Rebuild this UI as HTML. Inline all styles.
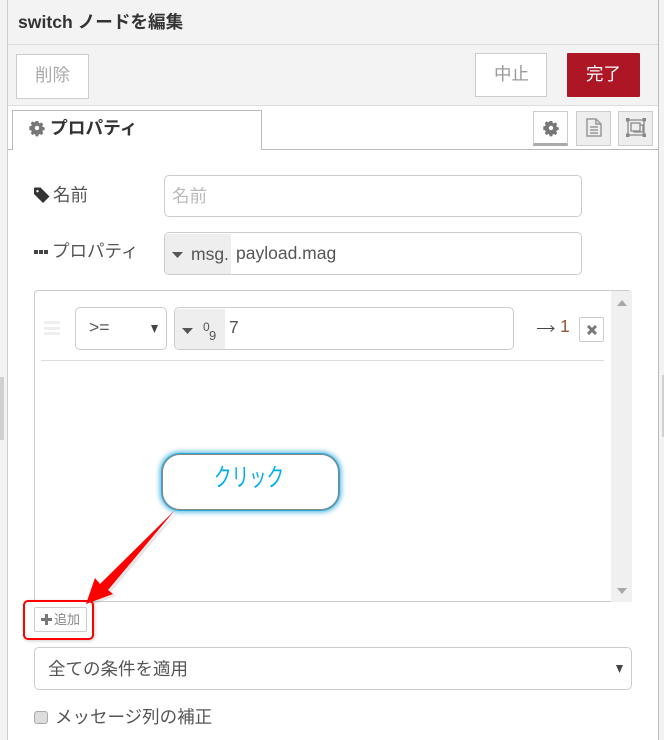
<!DOCTYPE html>
<html lang="ja"><head><meta charset="utf-8"><title>switch</title>
<style>
html,body{margin:0;padding:0;background:#fff}
body{width:664px;height:740px;position:relative;overflow:hidden;font-family:"Liberation Sans","Noto Sans CJK JP",sans-serif;color:#555}
.a{position:absolute;box-sizing:border-box}
.t{position:absolute;white-space:nowrap;line-height:1}
.inp{border:1px solid #ccc;border-radius:5px;background:#fff}
svg{position:absolute;overflow:visible}
</style></head><body>
<div class="a" style="left:0;top:0;width:8px;height:740px;background:#f3f3f3;border-right:1px solid #ccc"></div>
<div class="a" style="left:0;top:377px;width:4px;height:63px;background:#d0d0d0"></div>
<div class="a" style="left:658px;top:0;width:6px;height:740px;background:#f3f3f3;border-left:1px solid #bbb"></div>
<div class="a" style="left:662px;top:375px;width:2px;height:62px;background:#d0d0d0"></div>

<div class="a" style="left:8px;top:0;width:650px;height:45px;background:#f3f3f3;border-bottom:1px solid #ddd"></div>
<div class="t" style="left:18px;top:14px;font-size:17.6px;font-weight:bold;color:#333">switch ノードを編集</div>
<div class="a" style="left:8px;top:45px;width:650px;height:61px;background:#f3f3f3;border-bottom:1px solid #ddd"></div>

<div class="a" style="left:16px;top:54px;width:73px;height:45px;background:#fff;border:1px solid #ccc"></div>
<div class="t" style="left:35px;top:67px;font-size:17.5px;color:#aaa">削除</div>
<div class="a" style="left:475px;top:53px;width:72px;height:44px;background:#fff;border:1px solid #ccc"></div>
<div class="t" style="left:494px;top:66px;font-size:17.5px;color:#999">中止</div>
<div class="a" style="left:567px;top:53px;width:73px;height:44px;background:#ad1625;border-radius:1px"></div>
<div class="t" style="left:586px;top:66px;font-size:17.5px;color:#fff">完了</div>

<div class="a" style="left:8px;top:149px;width:650px;height:1px;background:#bbb"></div>
<div class="a" style="left:12px;top:110px;width:250px;height:40px;background:#fff;border:1px solid #bbb;border-bottom:0"></div>
<svg style="left:29px;top:120px" width="16" height="16" viewBox="0 0 16 16"><path fill="#777" fill-rule="evenodd" d="M6.700 1h2.600l.4 1.900 1.200.5 1.600-1 1.800 1.800-1 1.600.5 1.200 1.900.4v2.600l-1.900.4-.5 1.200 1 1.600-1.800 1.800-1.600-1-1.200.5-.4 1.900H6.700l-.4-1.900-1.200-.5-1.600 1-1.800-1.800 1-1.600-.5-1.200-1.900-.4V6.400l1.900-.4.5-1.200-1-1.600 1.800-1.800 1.600 1 1.200-.5zM8 5.800a2.200 2.200 0 1 0 0 4.400 2.200 2.200 0 0 0 0-4.400z"/></svg>
<div class="t" style="left:50px;top:120px;font-size:17.7px;font-weight:bold;color:#333">プロパティ</div>

<div class="a" style="left:533px;top:111px;width:35px;height:35px;background:#fff;border:1px solid #ccc;border-bottom:3px solid #aaa"></div>
<svg style="left:543px;top:120px" width="16" height="16" viewBox="0 0 16 16"><path fill="#777" fill-rule="evenodd" d="M6.700 1h2.600l.4 1.900 1.200.5 1.600-1 1.800 1.800-1 1.600.5 1.200 1.900.4v2.600l-1.900.4-.5 1.200 1 1.600-1.800 1.800-1.600-1-1.200.5-.4 1.900H6.700l-.4-1.900-1.200-.5-1.600 1-1.800-1.800 1-1.600-.5-1.200-1.900-.4V6.400l1.900-.4.5-1.200-1-1.600 1.800-1.800 1.600 1 1.200-.5zM8 5.800a2.200 2.200 0 1 0 0 4.400 2.200 2.200 0 0 0 0-4.400z"/></svg>
<div class="a" style="left:576px;top:111px;width:35px;height:35px;background:#eee;border:1px solid #ccc"></div>
<svg style="left:586px;top:118px" width="16" height="19" viewBox="0 0 16 19"><path fill="none" stroke="#999" stroke-width="1.500" d="M1 1h9l5 5v12H1zM10 1v5h5M4 9h8M4 12h8M4 15h8"/></svg>
<div class="a" style="left:618px;top:111px;width:35px;height:35px;background:#eee;border:1px solid #ccc"></div>
<svg style="left:626px;top:118px" width="20" height="20" viewBox="0 0 20 20"><path fill="none" stroke="#888" stroke-width="1.300" d="M2 2h16v15H2zM5 5h9v8H5zM14 7h3v7H8v-1"/><path fill="#888" d="M0 0h3.500v3.500H0zM16.500 0H20v3.500h-3.500zM0 15.500h3.500V19H0zM16.500 15.500H20V19h-3.500z"/></svg>

<svg style="left:34px;top:187px" width="16" height="16" viewBox="0 0 16 16"><path fill="#333" fill-rule="evenodd" d="M0 1.500Q0 .5 1 .5h5.500L15.500 9.500 9 16 0 7zM3.500 3a1.200 1.200 0 1 0 0 2.400 1.200 1.200 0 0 0 0-2.400z"/></svg>
<div class="t" style="left:53px;top:187px;font-size:17.5px;color:#555">名前</div>
<div class="a inp" style="left:164px;top:175px;width:418px;height:42px"></div>
<div class="t" style="left:172px;top:188px;font-size:17.5px;color:#bbb">名前</div>

<div class="a" style="left:34px;top:250px;width:4px;height:4px;background:#444"></div>
<div class="a" style="left:39px;top:250px;width:4px;height:4px;background:#444"></div>
<div class="a" style="left:44px;top:250px;width:4px;height:4px;background:#444"></div>
<div class="t" style="left:52px;top:243px;font-size:17.5px;color:#555">プロパティ</div>
<div class="a inp" style="left:164px;top:232px;width:418px;height:43px"></div>
<div class="a" style="left:165px;top:234px;width:66px;height:40px;background:#eee;border-radius:4px 0 0 4px"></div>
<svg style="left:172px;top:252px" width="11" height="6"><path fill="#555" d="M0 0h11L5.500 6z"/></svg>
<div class="t" style="left:191px;top:246px;font-size:17.500px;color:#555">msg.</div>
<div class="t" style="left:236px;top:245px;font-size:17.500px;color:#555">payload.mag</div>

<div class="a" style="left:34px;top:290px;width:598px;height:312px;border:1px solid #ccc;border-right:0;border-radius:4px 4px 0 0;background:#fff"></div>
<div class="a" style="left:611px;top:291px;width:21px;height:311px;background:#f0f0f0"></div>
<svg style="left:617px;top:300px" width="10" height="6"><path fill="#a8a8a8" d="M5 0l5 6H0z"/></svg>
<svg style="left:617px;top:588px" width="10" height="6"><path fill="#a8a8a8" d="M0 0h10L5 6z"/></svg>

<div class="a" style="left:44px;top:321px;width:16px;height:3px;background:#eee"></div>
<div class="a" style="left:44px;top:327px;width:16px;height:3px;background:#eee"></div>
<div class="a" style="left:44px;top:332px;width:16px;height:3px;background:#eee"></div>
<div class="a inp" style="left:75px;top:307px;width:92px;height:43px"></div>
<div class="t" style="left:89px;top:319px;font-size:17.500px;color:#555">&gt;=</div>
<svg style="left:151px;top:325px" width="7" height="8"><path fill="#444" d="M0 0h7L3.500 8z"/></svg>
<div class="a inp" style="left:174px;top:307px;width:340px;height:43px"></div>
<div class="a" style="left:175px;top:309px;width:50px;height:40px;background:#eee;border-radius:4px 0 0 4px"></div>
<svg style="left:182px;top:328px" width="11" height="6"><path fill="#555" d="M0 0h11L5.500 6z"/></svg>
<div class="t" style="left:203px;top:321px;font-size:12px;color:#555">0</div>
<div class="t" style="left:209px;top:329px;font-size:13px;color:#555">9</div>
<div class="t" style="left:229px;top:319px;font-size:17.500px;color:#555">7</div>
<svg style="left:537px;top:324px" width="18" height="9"><path fill="none" stroke="#444" stroke-width="1" d="M0 4.500h17M13.500 1.500l3.500 3-3.500 3"/></svg>
<div class="t" style="left:560px;top:318px;font-size:17.500px;color:#8a5a3a">1</div>
<div class="a" style="left:579px;top:317px;width:25px;height:25px;background:#fff;border:1px solid #ccc;border-radius:2px"></div>
<svg style="left:587px;top:325px" width="10" height="10"><path stroke="#777" stroke-width="3" d="M1 1l8 8M9 1l-8 8"/></svg>
<div class="a" style="left:41px;top:360px;width:563px;height:1px;background:#ddd"></div>

<div class="a" style="left:162px;top:454px;width:177px;height:56px;background:#fff;border:1px solid #888;border-radius:18px;box-shadow:0 0 0 1px #2ba8d8,0 0 4px 3px rgba(43,168,216,.65)"></div>
<div class="t" style="left:214px;top:466px;font-size:25px;transform:scaleX(.7);transform-origin:0 0;color:#00aeef">クリック</div>

<svg style="left:0;top:0" width="664" height="740"><path d="M175 510L108 590 113 594 86 604 95 578 100 584z" fill="#555" opacity=".15" transform="translate(3 2)"/><path d="M175 510L108 590 113 594 86 604 95 578 100 584z" fill="#f00"/></svg>

<div class="a" style="left:34px;top:607px;width:53px;height:25px;background:#fff;border:1px solid #ccc;border-radius:2px"></div>
<svg style="left:41px;top:614px" width="11" height="11"><path stroke="#777" stroke-width="3" d="M5.500 0v11M0 5.500h11"/></svg>
<div class="t" style="left:54px;top:613px;font-size:13px;color:#888">追加</div>
<div class="a" style="left:23px;top:600px;width:71px;height:40px;border:2px solid #f00;border-radius:5px;box-shadow:1px 1px 3px rgba(0,0,0,.2)"></div>

<div class="a inp" style="left:34px;top:647px;width:598px;height:43px"></div>
<div class="t" style="left:48px;top:661px;font-size:17.500px;color:#555">全ての条件を適用</div>
<svg style="left:616px;top:665px" width="7" height="8"><path fill="#444" d="M0 0h7L3.500 8z"/></svg>

<div class="a" style="left:34px;top:711px;width:14px;height:13px;background:#ddd;border:1px solid #aaa;border-radius:3px"></div>
<div class="t" style="left:55px;top:709px;font-size:17.500px;color:#555">メッセージ列の補正</div>
</body></html>
